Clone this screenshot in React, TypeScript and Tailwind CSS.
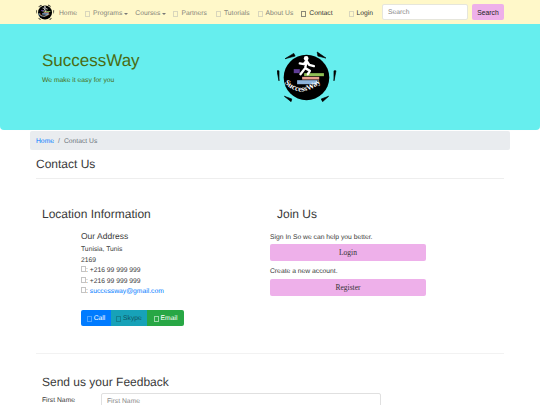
const font = { fontFamily: '"Liberation Sans", Arial, sans-serif' }
const serif = { fontFamily: '"Liberation Serif", serif' }

function Tofu({ className = 'border-[#c4c4c4]' }: { className?: string }) {
  return <span className={`inline-block h-[6px] w-[5px] border-[0.5px] ${className}`} />
}

function Logo({ width, height }: { width: number; height: number }) {
  const arcId = `logo-arc-${width}`
  return (
    <svg width={width} height={height} viewBox="50 30 185 155" className="shrink-0">
      <path d="M74 56 L100 40 L104 48 Z M170 36 L196 54 L172 48 Z M50 92 L56 122 L56 92 Z M226 92 L220 122 L220 92 Z M72 168 L92 184 L94 176 Z M204 168 L186 184 L182 176 Z" fill="#000" stroke="#000" strokeWidth="2" />
      <circle cx="138" cy="112" r="68" fill="#000" />
      <rect x="131" y="99" width="59" height="9" fill="#8fbf55" />
      <rect x="125" y="110" width="51" height="8" fill="#e8a08e" />
      <rect x="110" y="120" width="60" height="12" fill="#8db4dc" />
      <rect x="100" y="87" width="18" height="12" fill="#5f3d96" />
      <circle cx="137" cy="55" r="7" fill="#fff" />
      <path d="M118 70 L130 72 L138 62 L146 74 L160 78 M138 66 L134 84 L120 102 M134 84 L148 92 L142 102" fill="none" stroke="#fff" strokeWidth="7" strokeLinecap="round" strokeLinejoin="round" />
      <defs>
        <path id={arcId} d="M72 128 Q130 188 198 108" />
      </defs>
      <text fill="#fff" fontSize="24" fontWeight="700" style={serif}>
        <textPath href={`#${arcId}`}>SuccessWay</textPath>
      </text>
    </svg>
  )
}

function NavLink({ label, caret, dark, tofu = 'border-[#d9d6bc]' }: { label: string; caret?: boolean; dark?: boolean; tofu?: string | null }) {
  return (
    <span className={`flex items-center gap-[3px] whitespace-nowrap ${dark ? 'text-[#333]' : 'text-[#85837a]'}`}>
      {tofu && <Tofu className={tofu} />}
      {label}
      {caret && <span className="-ml-[1px] h-0 w-0 border-x-[2px] border-t-[2px] border-x-transparent border-t-[#777]" />}
    </span>
  )
}

export default function App() {
  return (
    <div className="h-[405px] w-[540px] overflow-hidden bg-white text-[6.75px] leading-[12px] text-[#3a3a3a] opacity-[0.999] [text-rendering:geometricPrecision]" style={font}>
      <nav className="flex h-[24px] items-center bg-[#fff8c9] pl-[36px] pr-[36px]">
        <Logo width={19} height={16} />
        <div className="ml-[4px] flex items-center pt-[3px]">
          <NavLink label="Home" tofu={null} />
          <span className="ml-[8px]"><NavLink label="Programs" caret /></span>
          <span className="ml-[7px]"><NavLink label="Courses" caret tofu={null} /></span>
          <span className="ml-[7px]"><NavLink label="Partners" /></span>
          <span className="ml-[9px]"><NavLink label="Tutorials" /></span>
          <span className="ml-[8px]"><NavLink label="About Us" /></span>
          <span className="ml-[8px]"><NavLink label="Contact" dark tofu="border-[#8a8878]" /></span>
          <span className="ml-[16px]"><NavLink label="Login" dark /></span>
        </div>
        <div className="ml-auto flex items-center gap-[4px]">
          <div className="flex h-[16px] w-[86px] items-center rounded-[2px] border border-[#e6e6dc] bg-white px-[5px] pt-[2px] text-[#888]">Search</div>
          <button className="h-[16px] w-[32px] rounded-[2px] bg-[#eeb0ea] pt-[2px] text-[#222]">Search</button>
        </div>
      </nav>

      <header className="flex h-[106px] rounded-b-[4px] bg-[#66eeee] pl-[42px] pt-[26px]">
        <div className="w-[235px]">
          <h1 className="text-[17px] leading-[22px] text-[#4a6b12]">SuccessWay</h1>
          <p className="mt-[3px] text-[#4a6b12]">We make it easy for you</p>
        </div>
        <Logo width={62} height={52} />
      </header>

      <main className="mx-[30px] mt-[1px]">
        <div className="flex h-[19px] items-center gap-[3px] rounded-[2px] bg-[#e9ecef] px-[6px] pt-[2px] text-[#6c757d]">
          <span className="text-[#007bff]">Home</span>
          <span className="mx-[1px]">/</span>
          <span>Contact Us</span>
        </div>
        <div className="mx-[6px] border-b border-[#eeeeee] pb-[5px] pt-[6px]">
          <h2 className="text-[12px] leading-[17px]">Contact Us</h2>
        </div>

        <div className="mx-[6px] flex border-b border-[#f2f2f2] pb-[27px] pt-[28px]">
          <div className="w-[234px]">
            <h3 className="pl-[6px] text-[12px] leading-[15px]">Location Information</h3>
            <div className="mt-[8px] pl-[45px]">
              <h4 className="text-[8.5px] leading-[12px]">Our Address</h4>
              <div className="mt-[3px] leading-[10.5px]">
                <p>Tunisia, Tunis</p>
                <p>2169</p>
                <p><Tofu />: +216 99 999 999</p>
                <p><Tofu />: +216 99 999 999</p>
                <p><Tofu />: <span className="text-[#007bff]">successway@gmail.com</span></p>
              </div>
              <div className="mt-[12px] flex h-[16px] w-[103px] overflow-hidden rounded-[2px] text-white">
                <span className="flex w-[30px] items-center justify-center gap-[2px] bg-[#007bff] pt-[2px]"><Tofu className="border-[#4da3ff]" />Call</span>
                <span className="flex w-[36px] items-center justify-center gap-[2px] bg-[#17a2b8] pt-[2px] text-[#0f5561]"><Tofu className="border-[#118090]" />Skype</span>
                <span className="flex w-[37px] items-center justify-center gap-[2px] bg-[#28a745] pt-[2px]"><Tofu className="border-[#9ad8a8]" />Email</span>
              </div>
            </div>
          </div>
          <div className="w-[156px]">
            <h3 className="pl-[7px] text-[12px] leading-[15px]">Join Us</h3>
            <p className="mt-[10px]">Sign In So we can help you better.</p>
            <button className="block h-[17px] w-[156px] rounded-[2px] bg-[#eeb0ea] text-[7.5px] leading-[17px] text-[#333]" style={serif}>Login</button>
            <p className="mt-[5px]">Create a new account.</p>
            <button className="mt-[1px] block h-[17px] w-[156px] rounded-[2px] bg-[#eeb0ea] text-[7.5px] leading-[17px] text-[#333]" style={serif}>Register</button>
          </div>
        </div>

        <div className="mx-[6px] pt-[21px]">
          <h3 className="pl-[6px] text-[12px] leading-[15px]">Send us your Feedback</h3>
          <div className="mt-[3px] flex items-start pl-[6px]">
            <label className="w-[59px] pt-[2px]">First Name</label>
            <div className="flex h-[16px] w-[280px] items-center rounded-[2px] border border-[#e0e0e0] px-[5px] pt-[2px] text-[#888]">First Name</div>
          </div>
        </div>
      </main>
    </div>
  )
}
